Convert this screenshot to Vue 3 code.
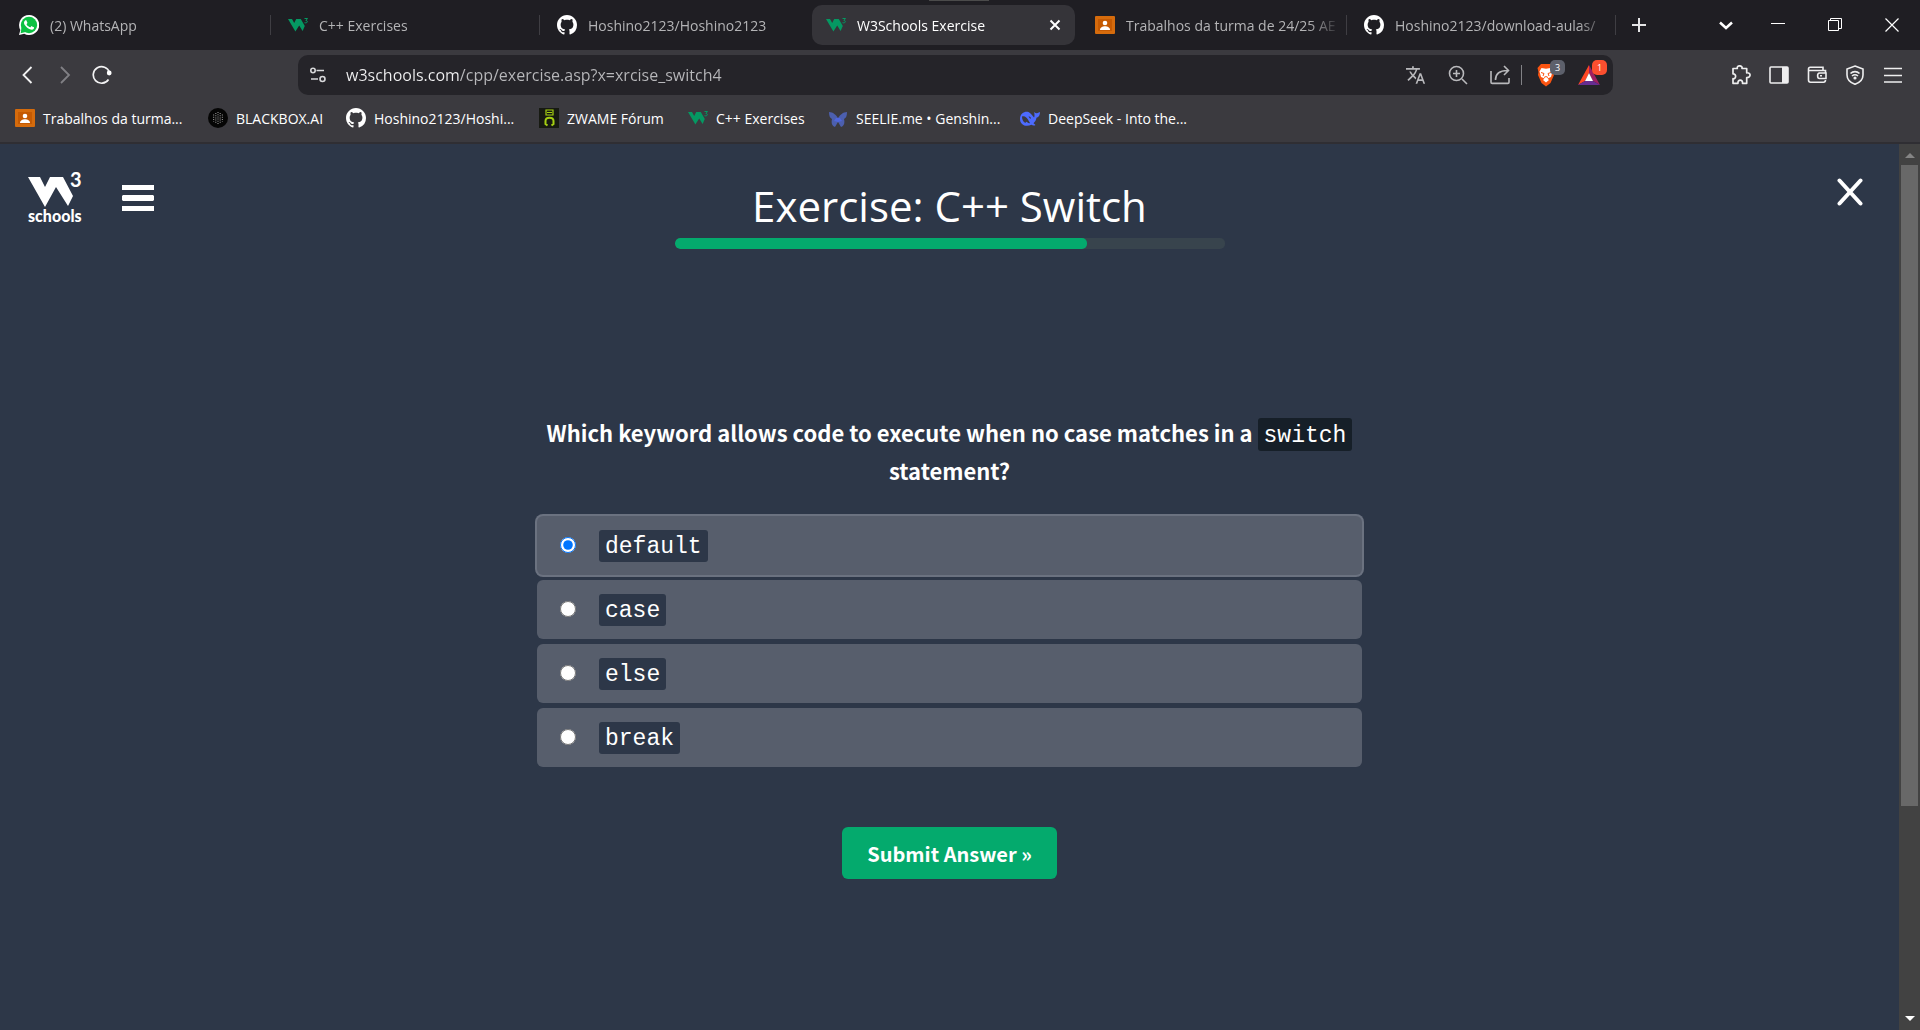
<script setup>
import { ref } from 'vue'

const tabs = [
  { icon: 'whatsapp', title: '(2) WhatsApp' },
  { icon: 'w3', title: 'C++ Exercises' },
  { icon: 'github', title: 'Hoshino2123/Hoshino2123' },
  { icon: 'w3', title: 'W3Schools Exercise', active: true },
  { icon: 'classroom', title: 'Trabalhos da turma de 24/25 AE' },
  { icon: 'github', title: 'Hoshino2123/download-aulas/' },
]
const bookmarks = [
  { icon: 'classroom', title: 'Trabalhos da turma...' },
  { icon: 'blackbox', title: 'BLACKBOX.AI' },
  { icon: 'github', title: 'Hoshino2123/Hoshi...' },
  { icon: 'zwame', title: 'ZWAME Fórum' },
  { icon: 'w3', title: 'C++ Exercises' },
  { icon: 'seelie', title: 'SEELIE.me • Genshin...' },
  { icon: 'deepseek', title: 'DeepSeek - Into the...' },
]
const options = ['default', 'case', 'else', 'break']
const answer = ref('default')
const url = ref('w3schools.com/cpp/exercise.asp?x=xrcise_switch4')
const progress = 75
</script>

<template>
  <div class="browser">
    <svg class="sprite" width="0" height="0" aria-hidden="true">
      <symbol id="whatsapp" viewBox="0 0 24 24">
        <path fill="#fff" d="M12 0a12 12 0 0 0-10.400 17.900L0 24l6.300-1.600A12 12 0 1 0 12 0z" />
        <circle cx="12" cy="12" r="9.800" fill="#0cc143" />
        <path fill="#0cc143" d="M3 15l-1 7 7-2z" />
        <path fill="#fff" d="M17.472 14.382c-.297-.149-1.758-.867-2.03-.967-.273-.099-.471-.148-.67.15-.197.297-.767.966-.94 1.164-.173.199-.347.223-.644.075-.297-.15-1.255-.463-2.39-1.475-.883-.788-1.48-1.761-1.653-2.059-.173-.297-.018-.458.13-.606.134-.133.298-.347.446-.52.149-.174.198-.298.298-.497.099-.198.05-.371-.025-.52-.075-.149-.669-1.612-.916-2.207-.242-.579-.487-.5-.669-.51-.173-.008-.371-.01-.57-.01-.198 0-.52.074-.792.372-.272.297-1.04 1.016-1.04 2.479 0 1.462 1.065 2.875 1.213 3.074.149.198 2.096 3.2 5.077 4.487.709.306 1.262.489 1.694.625.712.227 1.36.195 1.871.118.571-.085 1.758-.719 2.006-1.413.248-.694.248-1.289.173-1.413-.074-.124-.272-.198-.57-.347z" />
      </symbol>
      <symbol id="w3" viewBox="0 0 20 20">
        <path fill="#059862" d="M0 4h4l2.200 4L8.200 4h4.600l4 7-2.200 5-3.400-5.500L7.400 16.500z" />
        <path fill="none" stroke="#059862" stroke-width="1" d="M16.500 3.500h3l-1.600 2c2.400 0 1.800 3.200-1.400 2.200" />
      </symbol>
      <symbol id="github" viewBox="0 0 16 16">
        <path fill="#fff" d="M8 0C3.580 0 0 3.580 0 8c0 3.540 2.290 6.530 5.470 7.590.4.070.55-.17.55-.38 0-.19-.01-.82-.01-1.490-2.010.37-2.530-.49-2.690-.94-.09-.23-.48-.94-.82-1.130-.28-.15-.68-.52-.01-.53.63-.01 1.080.58 1.230.82.72 1.210 1.870.87 2.330.66.07-.52.28-.87.51-1.070-1.780-.2-3.640-.89-3.640-3.950 0-.87.31-1.590.82-2.150-.08-.2-.36-1.020.08-2.120 0 0 .67-.21 2.200.82.64-.18 1.320-.27 2-.27s1.360.09 2 .27c1.530-1.040 2.200-.82 2.200-.82.44 1.100.16 1.920.08 2.120.51.56.82 1.270.82 2.150 0 3.070-1.870 3.750-3.650 3.950.29.25.54.73.54 1.480 0 1.070-.01 1.930-.01 2.200 0 .21.15.46.55.38A8.010 8.010 0 0 0 16 8c0-4.420-3.580-8-8-8z" />
      </symbol>
      <symbol id="classroom" viewBox="0 0 20 20">
        <rect y="1" width="20" height="18" rx="1" fill="#d56b0c" />
        <rect x="3" y="4" width="14" height="12" fill="#c55a02" />
        <circle cx="10" cy="8" r="2.300" fill="#fff" />
        <path fill="#fff" d="M5 15c0-5 10-5 10 0z" />
      </symbol>
      <symbol id="blackbox" viewBox="0 0 20 20">
        <circle cx="10" cy="10" r="10" fill="#050505" />
        <g fill="none" stroke="#8b8b8b" stroke-width="1.200" stroke-dasharray="1 1.200">
          <path d="M10 4v12M7.800 5v10M12.200 5v10M5.600 6.500v7M14.400 6.500v7" />
        </g>
      </symbol>
      <symbol id="zwame" viewBox="0 0 20 20">
        <rect width="20" height="20" fill="#171a12" />
        <path fill="none" stroke="#a5cf12" stroke-width="1.200" d="M7 2h7v5H7zM8 4.500h5" />
        <path fill="none" stroke="#a5cf12" stroke-width="2" d="M8.500 17.500l-2-1.500v-3c0-4.500 8-4.500 8 0v3l-2 1.500" />
      </symbol>
      <symbol id="seelie" viewBox="0 0 20 20">
        <path fill="#4c5fae" d="M1 4c4 0 7 3 9 6 2-3 5-6 9-6 0 4-1 6-3 7 1 4 0 7-3 8l-3-5-3 5c-3-1-4-4-3-8-2-1-3-3-3-7z" />
        <path fill="#4f66dd" d="M8 10h4l2 3-4 1-4-1z" />
      </symbol>
      <symbol id="deepseek" viewBox="0 0 20 20">
        <path fill="#4d6bfe" d="M0 11C0 5 5 3 8.500 4c2 1 3.500 3 5.500 5.500.8-1 .5-2.500.2-5.500 1 1 2 1.500 2.800 1.300L20 4c0 3-1 5-3.500 5.700-.500 2.500-1.500 4-3 5.500l2 1.800c-1.500 1-3 .5-4-.3C6 19.500 0 17 0 11z" />
        <path fill="#3b3a3f" d="M2 8.500c2.500-1 5 1 6.500 4l1.500 2.500c-1.500.8-2.300-.8-3.300-1.300-1 0-.7 1.300-1.700 1C3 13.500 2 11.500 2 8.500z" />
        <path fill="#3b3a3f" d="M8.500 8.500c1.500-.5 2.500.8 2.500 2.200-1 0-1.500-.5-2.500-2.200z" />
      </symbol>
    </svg>

    <header class="chrome">
      <div class="tab-strip">
        <nav class="tabs" aria-label="Open tabs">
          <div v-for="(tab, i) in tabs" :key="i" class="tab" :class="{ active: tab.active }">
            <button class="tab-label" type="button">
              <svg class="favicon"><use :href="'#' + tab.icon" /></svg>
              <span class="tab-title">{{ tab.title }}</span>
            </button>
            <button v-if="tab.active" class="tab-close" type="button" aria-label="Close tab">
              <svg width="12" height="12" viewBox="0 0 12 12"><path d="M1.500 1.500l9 9m0-9l-9 9" stroke="#fff" stroke-width="2" /></svg>
            </button>
          </div>
        </nav>
        <button class="new-tab" type="button" aria-label="New tab">
          <svg width="14" height="14" viewBox="0 0 14 14"><path d="M7 0v14M0 7h14" stroke="#e5e5e6" stroke-width="2" /></svg>
        </button>
        <div class="window-buttons">
          <button type="button" aria-label="Search tabs">
            <svg width="14" height="14" viewBox="0 0 14 14"><path d="M1 4.500l6 5.500 6-5.500" fill="none" stroke="#fff" stroke-width="2.500" /></svg>
          </button>
          <button type="button" aria-label="Minimize">
            <svg width="14" height="14" viewBox="0 0 14 14"><path d="M0 5.500h14" stroke="#fff" /></svg>
          </button>
          <button type="button" aria-label="Restore">
            <svg width="14" height="14" viewBox="0 0 14 14"><path d="M.5 2.500h10v10H.5zM2.500 2V.5h11v10H11" fill="none" stroke="#fff" /></svg>
          </button>
          <button type="button" aria-label="Close">
            <svg width="14" height="14" viewBox="0 0 14 14"><path d="M.5.5l13 13m0-13l-13 13" stroke="#fff" stroke-width="1.200" /></svg>
          </button>
        </div>
        <span class="top-handle"></span>
      </div>

      <div class="toolbar">
        <div class="history">
          <button type="button" aria-label="Back">
            <svg width="20" height="20" viewBox="0 0 20 20"><path d="M13.500 2L5.500 10l8 8" fill="none" stroke="#f2f2f3" stroke-width="1.800" /></svg>
          </button>
          <button type="button" aria-label="Forward">
            <svg width="20" height="20" viewBox="0 0 20 20"><path d="M6 2l8 8-8 8" fill="none" stroke="#818085" stroke-width="1.800" /></svg>
          </button>
          <button type="button" aria-label="Reload">
            <svg width="20" height="20" viewBox="0 0 20 20"><path d="M16.500 14.500a8.300 8.300 0 1 1 1-7" fill="none" stroke="#f2f2f3" stroke-width="1.700" /><circle cx="17.200" cy="8" r="2.400" fill="#fff" /></svg>
          </button>
        </div>

        <div class="address">
          <svg class="site-info" width="16" height="16" viewBox="0 0 16 16" fill="none" stroke="#d8d8da" stroke-width="1.600"><circle cx="3" cy="3.500" r="2.200" /><path d="M6.500 3.500H14M1 12h7" /><circle cx="12.500" cy="12" r="2.500" /></svg>
          <input v-model="url" class="url" type="text" aria-label="Address" />
          <div class="address-actions">
            <button type="button" aria-label="Translate">
              <svg width="20" height="20" viewBox="1 1 23 22"><path fill="#b9b9bc" d="M12.870 15.070l-2.540-2.510.03-.03A17.520 17.520 0 0 0 14.070 6H17V4h-7V2H8v2H1v1.990h11.170C11.500 7.920 10.440 9.750 9 11.350 8.070 10.320 7.300 9.190 6.690 8h-2c.73 1.630 1.730 3.170 2.980 4.560l-5.090 5.020L4 19l5-5 3.110 3.110.76-2.040zM18.500 10h-2L12 22h2l1.120-3h4.750L21 22h2l-4.500-12zm-2.620 7l1.620-4.330L19.120 17h-3.240z" /></svg>
            </button>
            <button type="button" aria-label="Zoom">
              <svg width="20" height="20" viewBox="0 0 20 20" fill="none" stroke="#b9b9bc" stroke-width="1.600"><circle cx="8.500" cy="8.500" r="7" /><path d="M14 14l5 5M5 8.500h7M8.500 5v7" /></svg>
            </button>
            <button type="button" aria-label="Share">
              <svg width="20" height="20" viewBox="0 0 20 20" fill="none" stroke="#b9b9bc" stroke-width="1.600"><path d="M1 6v11.200c0 .6.400 1.200 1.200 1.200h15.600c.7 0 1.200-.5 1.200-1.200V13M5.500 15c0-6 3-9.500 12-9.500M14 1l4.500 4.500L14 10" /></svg>
            </button>
            <span class="divider"></span>
            <button class="with-badge" type="button" aria-label="Brave Shields">
              <svg width="20" height="24" viewBox="0 0 20 24"><path fill="#fb5411" d="M5 1h10l3.500 4-1 4 .5 3-3.500 8-4.500 3.500L5.500 20 2 12l.5-3-1-4z" /><path fill="#fff" d="M5.500 5l4.500.8L14.500 5l2 3.500-1.500 5.500-3.500 1.500 1.500 1.500-3 2.500L7 17l1.500-1.500L5 14 3.500 8.500z" /><path fill="none" stroke="#fb5411" stroke-width="1" d="M5 9.500l3 1-1 2.500m8-3.500l-3 1 1 2.500M8 14.500l2-1 2 1" /></svg>
              <span class="badge">3</span>
            </button>
            <button class="with-badge" type="button" aria-label="Brave Rewards">
              <svg width="22" height="24" viewBox="0 -2 22 24"><path fill="#ff4724" d="M11 0L0 20l7-4 4-8z" /><path fill="#9e1f63" d="M11 0l11 20-7-4-4-8z" /><path fill="#662d91" d="M0 20h22l-7-4H7z" /><path fill="#fff" d="M11 8l4 8H7z" /></svg>
              <span class="badge hot">1</span>
            </button>
          </div>
        </div>

        <div class="tools">
          <button type="button" aria-label="Extensions">
            <svg width="20" height="20" viewBox="0 0 20 20"><path fill="none" stroke="#eeeeef" stroke-width="1.700" stroke-linejoin="round" d="M2 3.500h4.300C5.500-.3 12 .2 11 3.500h4.700v4.300c4.500-.5 4.500 5 0 4.700v5.800h-4.200c.5-4.300-5-4.300-4.500 0H2v-4.600c3.500.5 3.500-5.200 0-4.700z" /></svg>
          </button>
          <button type="button" aria-label="Sidebar">
            <svg width="20" height="20" viewBox="0 0 20 20"><rect x="1" y="2" width="18" height="16" rx="1" fill="none" stroke="#eeeeef" stroke-width="1.600" /><path fill="#eeeeef" d="M13 2h6v16h-6z" /></svg>
          </button>
          <button type="button" aria-label="Wallet">
            <svg width="20" height="20" viewBox="0 0 20 20" fill="none" stroke="#eeeeef" stroke-width="1.600"><path d="M18.500 7.500v-2H1.500V15c0 1.500.5 2.200 2 2.200h13c1.300 0 2-.7 2-2.200M1.500 6V4c0-1 .5-1.700 1.700-1.700H16v3M19 8h-6.500c-2.500 0-2.500 5.500 0 5.500H19zM13 10.800h2" /></svg>
          </button>
          <button type="button" aria-label="VPN">
            <svg width="20" height="20" viewBox="0 0 20 20" fill="none" stroke="#eeeeef" stroke-width="1.600"><path d="M10 1l8 3v6c0 4-3 7.500-8 9.300C5 17.500 2 14 2 10V4zM5.500 8.500c2.500-2.500 6.500-2.500 9 0M7 11c2-1.700 4-1.700 6 0" /><circle cx="10" cy="13" r=".8" /></svg>
          </button>
          <button type="button" aria-label="Menu">
            <svg width="20" height="20" viewBox="0 0 20 20"><path d="M1 3.500h18M1 10.500h18M1 17h18" stroke="#eeeeef" stroke-width="1.600" /></svg>
          </button>
        </div>
      </div>

      <nav class="bookmarks" aria-label="Bookmarks">
        <a v-for="mark in bookmarks" :key="mark.title" href="#">
          <svg class="favicon"><use :href="'#' + mark.icon" /></svg>
          <span>{{ mark.title }}</span>
        </a>
      </nav>
    </header>

    <div class="viewport">
      <main class="page">
        <div class="page-top">
          <div class="brand">
            <a class="logo" href="#" aria-label="W3Schools">
              <svg width="54" height="36" viewBox="0 0 54 36"><path fill="#fff" d="M0 5h12l5 10 5-10h13l10 19-5 10-12-19-11 20z" /><text x="42" y="15" fill="#fff" font-family="Lato, sans-serif" font-weight="700" font-size="20">3</text></svg>
              <span>schools</span>
            </a>
            <button class="menu" type="button" aria-label="Open menu">
              <svg width="32" height="26" viewBox="0 0 32 26"><path fill="#fff" d="M0 0h32v5H0zM1 10h30l1 1v4l-1 1H1l-1-1v-4zM0 21h32v5H0z" /></svg>
            </button>
          </div>
          <div class="heading">
            <h1>Exercise: C++ Switch</h1>
            <div class="progress" role="progressbar" :aria-valuenow="progress" aria-valuemin="0" aria-valuemax="100">
              <span :style="{ width: progress + '%' }"></span>
            </div>
          </div>
          <button class="close" type="button" aria-label="Close exercise">
            <svg width="26" height="28" viewBox="0 0 26 28"><path d="M2.500 2.500l21 23m0-23l-21 23" stroke="#fff" stroke-width="4" stroke-linecap="round" /></svg>
          </button>
        </div>

        <form class="exercise" @submit.prevent>
          <p class="question">
            Which keyword allows code to execute when no case matches in a <code>switch</code> statement?
          </p>
          <div class="options" role="radiogroup">
            <label v-for="option in options" :key="option" class="option" :class="{ selected: answer === option }">
              <input v-model="answer" type="radio" name="answer" :value="option" />
              <code>{{ option }}</code>
            </label>
          </div>
          <button class="submit" type="submit">Submit Answer »</button>
        </form>
      </main>

      <div class="scrollbar" aria-hidden="true">
        <svg class="arrow" width="10" height="5" viewBox="0 0 10 5"><path fill="#858585" d="M5 0l5 5H0z" /></svg>
        <div class="track"><div class="thumb"></div></div>
        <svg class="arrow" width="10" height="5" viewBox="0 0 10 5"><path fill="#fff" d="M0 0h10L5 5z" /></svg>
      </div>
    </div>
  </div>
</template>

<style>
body {
  background: #2d3748;
}
</style>

<style scoped>
* {
  box-sizing: border-box;
}
.browser {
  display: flex;
  flex-direction: column;
  min-height: 100vh;
  color: #fff;
  font-family: "Open Sans", "Noto Sans", sans-serif;
}
.sprite {
  position: absolute;
}
button {
  display: flex;
  align-items: center;
  justify-content: center;
  padding: 0;
  border: 0;
  background: none;
  color: inherit;
  font: inherit;
}
a {
  color: inherit;
  text-decoration: none;
}
svg {
  display: block;
  flex: none;
}
.favicon {
  width: 20px;
  height: 20px;
}

/* Tab strip */
.tab-strip {
  position: relative;
  display: flex;
  align-items: center;
  height: 50px;
  padding-left: 2px;
  background: #1f1e23;
}
.top-handle {
  position: absolute;
  top: 0;
  left: 929px;
  width: 60px;
  height: 1px;
  background: #4b4b4b;
}
.tabs {
  display: grid;
  flex: 0 1 1614px;
  grid-template-columns: repeat(6, minmax(0, 1fr));
  min-width: 0;
}
.tab {
  display: flex;
  align-items: center;
  min-width: 0;
  height: 40px;
  padding: 0 6px 0 17px;
  background: linear-gradient(#3f3e43, #3f3e43) right center / 1px 20px no-repeat;
  color: #b4b4b6;
  font-size: 14px;
}
.tab:nth-child(3),
.tab.active {
  background-image: none;
}
.tab.active {
  margin: 0 3px;
  padding: 0 14px;
  border-radius: 10px;
  background-color: #353439;
  color: #fff;
}
.tab-label {
  flex: 1;
  justify-content: flex-start;
  gap: 11px;
  min-width: 0;
}
.tab-title {
  flex: 1;
  overflow: hidden;
  text-align: left;
  white-space: nowrap;
  mask-image: linear-gradient(90deg, #000 calc(100% - 32px), transparent);
}
.new-tab {
  width: 46px;
  height: 40px;
}
.window-buttons {
  display: flex;
  margin-left: auto;
}
.window-buttons button {
  width: 57px;
  height: 50px;
}
.window-buttons button:first-child {
  width: 46px;
}

/* Toolbar */
.toolbar {
  display: flex;
  align-items: center;
  height: 50px;
  background: #3b3a3f;
}
.history {
  display: flex;
  flex: 0 0 298px;
  gap: 17px;
  padding-left: 18px;
}
.address {
  display: flex;
  flex: 1;
  align-items: center;
  min-width: 0;
  height: 40px;
  padding: 0 13px 0 12px;
  border-radius: 10px;
  background: #252429;
}
.url {
  flex: 1;
  min-width: 0;
  margin-left: 20px;
  padding: 0;
  border: 0;
  outline: 0;
  background: linear-gradient(90deg, #f0f0f1 113px, #b8b8bb 113px);
  background-clip: text;
  color: transparent;
  font: 400 16px/28px "Open Sans", "Noto Sans", sans-serif;
}
.address-actions {
  display: flex;
  align-items: center;
  gap: 22px;
}
.divider {
  width: 1px;
  height: 20px;
  margin: 0 -8px 0 -11px;
  background: #828286;
}
.with-badge {
  position: relative;
}
.badge {
  position: absolute;
  top: -3px;
  left: 14px;
  width: 15px;
  height: 15px;
  border-radius: 5px;
  background: #5d606b;
  color: #fff;
  font-size: 9px;
  line-height: 15px;
}
.badge.hot {
  background: #fb4f2f;
}
.tools {
  display: flex;
  flex: 0 0 307px;
  justify-content: flex-end;
  gap: 18px;
  padding-right: 17px;
}

/* Bookmarks bar */
.bookmarks {
  display: grid;
  grid-template-columns: 193px 138px 193px 149px 140px 192px auto;
  align-items: center;
  height: 44px;
  padding: 0 15px 6px;
  border-bottom: 2px solid #2f2e33;
  background: #3b3a3f;
  font-size: 14px;
}
.bookmarks a {
  display: flex;
  align-items: center;
  gap: 8px;
  white-space: nowrap;
}

/* Page */
.viewport {
  display: flex;
  flex: 1;
}
.page {
  flex: 1;
  background: #2d3748;
}
.page-top {
  display: grid;
  grid-template-columns: 1fr minmax(0, 550px) 1fr;
  align-items: start;
  padding: 28px 28px 0;
}
.brand {
  display: flex;
  align-items: center;
  gap: 40px;
}
.logo {
  width: 54px;
  font: 900 16px/16px Lato, sans-serif;
}
.close {
  justify-self: end;
  margin: 6px 8px 0 0;
}
.heading {
  text-align: center;
}
h1 {
  margin: 4px 0 2px;
  font-size: 42px;
  font-weight: 400;
  line-height: 60px;
  white-space: nowrap;
}
.progress {
  overflow: hidden;
  height: 11px;
  border-radius: 5px;
  background: #38444d;
}
.progress span {
  display: block;
  height: 100%;
  border-radius: 5px;
  background: #04aa6d;
}
.exercise {
  display: flex;
  flex-direction: column;
  align-items: center;
  width: 100%;
  max-width: 825px;
  margin: 164px auto 0;
  padding-bottom: 40px;
  font-family: "Noto Sans CJK JP", sans-serif;
}
.question {
  margin: 0;
  font-size: 22px;
  font-weight: 600;
  line-height: 38px;
  text-align: center;
}
code {
  padding: 2px 6px 0;
  border-radius: 3px;
  background: #2d3748;
  font: 400 23px/30px "Liberation Mono", monospace;
}
.question code {
  padding: 5px 6px 2px;
  background: #161f28;
}
.options {
  display: flex;
  flex-direction: column;
  gap: 5px;
  width: 100%;
  margin-top: 27px;
}
.option {
  display: flex;
  align-items: center;
  height: 59px;
  padding-left: 23px;
  border-radius: 6px;
  background: #575e6c;
}
.option.selected {
  box-shadow: 0 0 0 2px #6b7280;
}
.option input {
  width: 16px;
  height: 16px;
  margin: 0 23px 2px 0;
}
.submit {
  height: 52px;
  margin-top: 60px;
  padding: 0 25px;
  border-radius: 6px;
  background: #04aa6d;
  font-size: 20px;
  font-weight: 600;
}

/* Scrollbar */
.scrollbar {
  display: flex;
  flex-direction: column;
  align-items: center;
  width: 21px;
  padding: 9px 2px;
  background: #424242;
}
.track {
  flex: 1;
  width: 17px;
  margin: 7px 0;
}
.thumb {
  height: 76%;
  background: #686868;
}
</style>
